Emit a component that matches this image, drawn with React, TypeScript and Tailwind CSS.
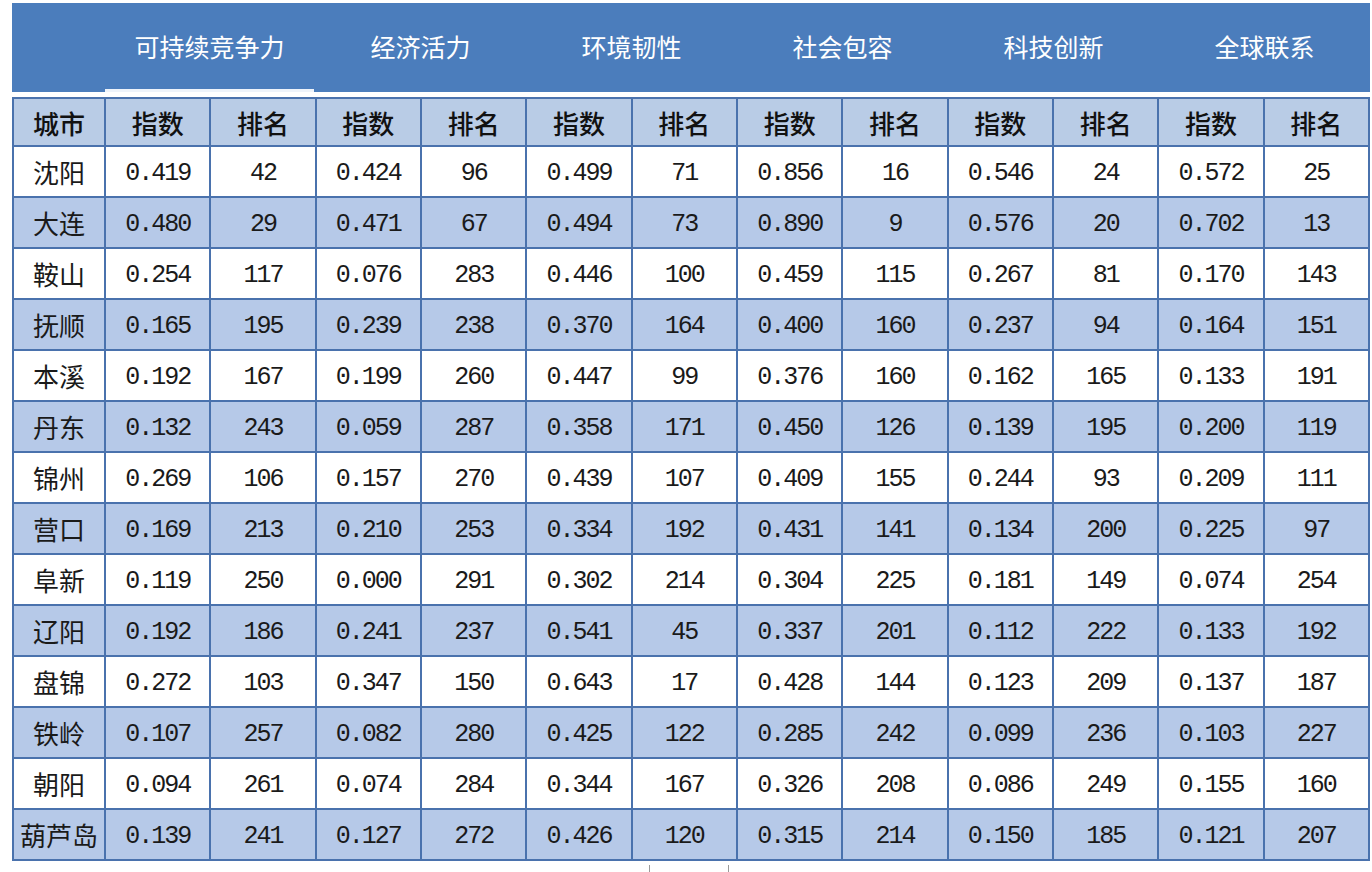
import React from "react";

const tabs = ["可持续竞争力", "经济活力", "环境韧性", "社会包容", "科技创新", "全球联系"];

const rows: [string, ...string[]][] = [
  ["沈阳", "0.419", "42", "0.424", "96", "0.499", "71", "0.856", "16", "0.546", "24", "0.572", "25"],
  ["大连", "0.480", "29", "0.471", "67", "0.494", "73", "0.890", "9", "0.576", "20", "0.702", "13"],
  ["鞍山", "0.254", "117", "0.076", "283", "0.446", "100", "0.459", "115", "0.267", "81", "0.170", "143"],
  ["抚顺", "0.165", "195", "0.239", "238", "0.370", "164", "0.400", "160", "0.237", "94", "0.164", "151"],
  ["本溪", "0.192", "167", "0.199", "260", "0.447", "99", "0.376", "160", "0.162", "165", "0.133", "191"],
  ["丹东", "0.132", "243", "0.059", "287", "0.358", "171", "0.450", "126", "0.139", "195", "0.200", "119"],
  ["锦州", "0.269", "106", "0.157", "270", "0.439", "107", "0.409", "155", "0.244", "93", "0.209", "111"],
  ["营口", "0.169", "213", "0.210", "253", "0.334", "192", "0.431", "141", "0.134", "200", "0.225", "97"],
  ["阜新", "0.119", "250", "0.000", "291", "0.302", "214", "0.304", "225", "0.181", "149", "0.074", "254"],
  ["辽阳", "0.192", "186", "0.241", "237", "0.541", "45", "0.337", "201", "0.112", "222", "0.133", "192"],
  ["盘锦", "0.272", "103", "0.347", "150", "0.643", "17", "0.428", "144", "0.123", "209", "0.137", "187"],
  ["铁岭", "0.107", "257", "0.082", "280", "0.425", "122", "0.285", "242", "0.099", "236", "0.103", "227"],
  ["朝阳", "0.094", "261", "0.074", "284", "0.344", "167", "0.326", "208", "0.086", "249", "0.155", "160"],
  ["葫芦岛", "0.139", "241", "0.127", "272", "0.426", "120", "0.315", "214", "0.150", "185", "0.121", "207"],
];

const cjk = "font-['Noto_Sans_CJK_SC',sans-serif]";
const mono = "font-['Liberation_Mono','DejaVu_Sans_Mono',monospace]";

export default function App() {
  return (
    <div className="w-[1372px] h-[872px] bg-white pl-[12px] pt-[3px] overflow-hidden">
      {/* tab header */}
      <div className={`flex w-[1358px] h-[89px] bg-[#4b7dbc] text-white text-[25px] ${cjk}`}>
        <div className="w-[92px]" />
        {tabs.map((t, i) => (
          <div key={t} className="flex-1 flex flex-col">
            <div className="flex-1 flex items-center justify-center pt-[2px]">{t}</div>
            <div className={i === 0 ? "h-[3px] bg-[#eef3fa] mx-[1px]" : "h-[3px]"} />
          </div>
        ))}
      </div>

      {/* table */}
      <div className="mt-[5px] w-[1358px] grid grid-cols-[92px_repeat(12,1fr)] border-l-2 border-t-2 border-[#4a72ad]">
        {["城市", "指数", "排名", "指数", "排名", "指数", "排名", "指数", "排名", "指数", "排名", "指数", "排名"].map((h, i) => (
          <div
            key={i}
            className={`h-[48px] flex items-center justify-center bg-[#b9cce6] border-r-2 border-b-2 border-[#4a72ad] text-[26px] text-[#111] font-medium ${cjk}`}
          >
            {h}
          </div>
        ))}
        {rows.map((r, ri) =>
          r.map((c, ci) => (
            <div
              key={`${ri}-${ci}`}
              className={`h-[51px] flex items-center justify-center border-r-2 border-b-2 border-[#4a72ad] text-[#1a1a1a] ${
                ri % 2 === 1 ? "bg-[#b6c9e8]" : "bg-white"
              } ${ci === 0 ? `text-[26px] ${cjk}` : `text-[25px] tracking-[-2px] pt-[4px] ${mono}`}`}
            >
              {c}
            </div>
          ))
        )}
      </div>

      {/* cut-off element below the table */}
      <div className="ml-[637px] mt-[4px] w-[80px] h-[20px] border-l border-r border-[#9a9a9a]" />
    </div>
  );
}
